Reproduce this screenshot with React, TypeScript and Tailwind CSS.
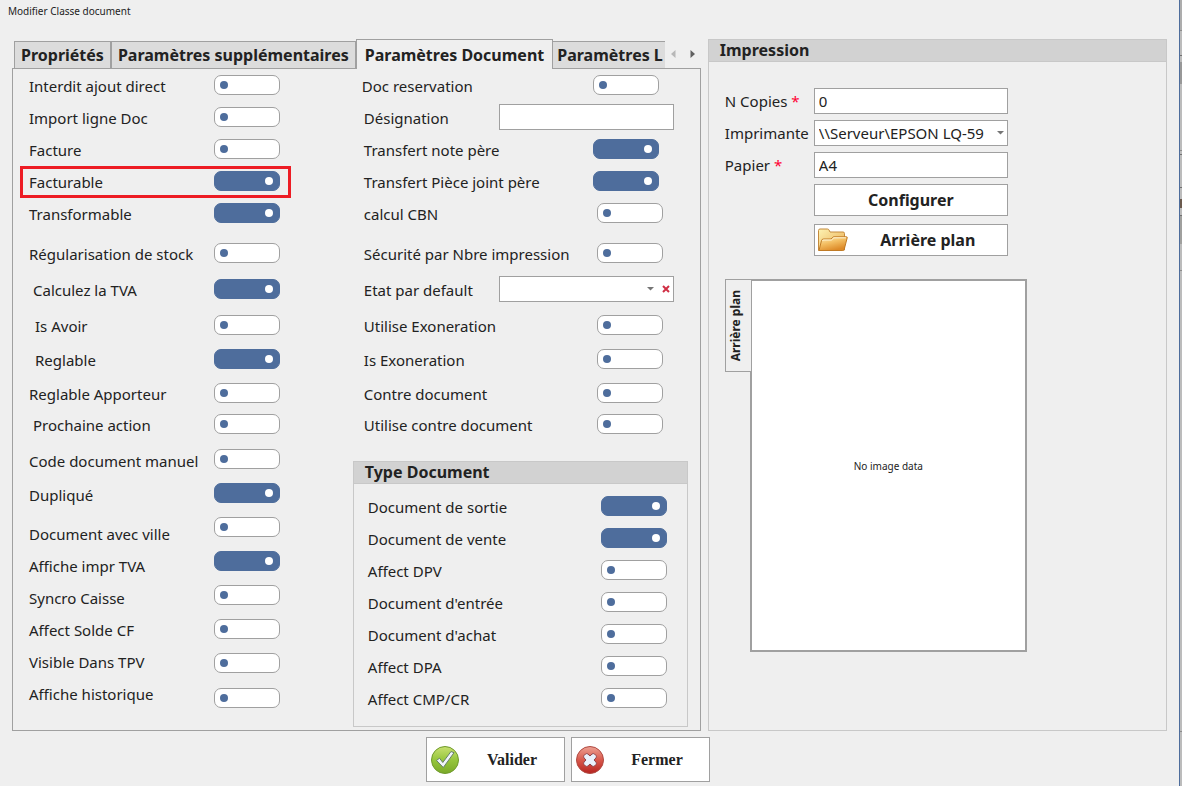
import React from "react";

type Row = { label: string; rowClass: string; indent?: string };
type SwitchSlot = { rowClass: string; on?: boolean };

const leftLabels: Row[] = [
  { label: "Interdit ajout direct", rowClass: "h-8" },
  { label: "Import ligne Doc", rowClass: "h-8" },
  { label: "Facture", rowClass: "h-8" },
  { label: "Facturable", rowClass: "h-8" },
  { label: "Transformable", rowClass: "h-8" },
  { label: "Régularisation de stock", rowClass: "mt-1.5 h-9" },
  { label: "Calculez la TVA", rowClass: "h-9", indent: "pl-1" },
  { label: "Is Avoir", rowClass: "h-9", indent: "pl-1.5" },
  { label: "Reglable", rowClass: "h-8", indent: "pl-1.5" },
  { label: "Reglable Apporteur", rowClass: "h-9" },
  { label: "Prochaine action", rowClass: "h-[26px]", indent: "pl-1" },
  { label: "Code document manuel", rowClass: "mt-1.5 h-[34px]" },
  { label: "Dupliqué", rowClass: "h-[34px]" },
  { label: "Document avec ville", rowClass: "mt-1.5 h-8" },
  { label: "Affiche impr TVA", rowClass: "h-8" },
  { label: "Syncro Caisse", rowClass: "h-8" },
  { label: "Affect Solde CF", rowClass: "h-8" },
  { label: "Visible Dans TPV", rowClass: "h-8" },
  { label: "Affiche historique", rowClass: "h-8" },
];

const leftSwitches: SwitchSlot[] = [
  { rowClass: "h-8" },
  { rowClass: "h-8" },
  { rowClass: "h-8" },
  { rowClass: "h-8", on: true },
  { rowClass: "h-8", on: true },
  { rowClass: "mt-1.5 h-9" },
  { rowClass: "h-9", on: true },
  { rowClass: "h-9" },
  { rowClass: "h-8", on: true },
  { rowClass: "h-9" },
  { rowClass: "h-[26px]" },
  { rowClass: "mt-[5px] h-[34px]" },
  { rowClass: "h-[34px]", on: true },
  { rowClass: "h-[34px]" },
  { rowClass: "h-[34px]", on: true },
  { rowClass: "h-[34px]" },
  { rowClass: "h-[34px]" },
  { rowClass: "h-[34px]" },
  { rowClass: "h-9" },
];

type Field = { label: string; rowClass: string; kind: "switch" | "text" | "select"; on?: boolean; inset?: string; indent?: string };

const middleFields: Field[] = [
  { label: "Doc reservation", rowClass: "h-8", kind: "switch", inset: "mr-[15px]", indent: "pl-0" },
  { label: "Désignation", rowClass: "h-8", kind: "text" },
  { label: "Transfert note père", rowClass: "h-8", kind: "switch", on: true, inset: "mr-[15px]" },
  { label: "Transfert Pièce joint père", rowClass: "h-8", kind: "switch", on: true, inset: "mr-[15px]" },
  { label: "calcul CBN", rowClass: "h-8", kind: "switch" },
  { label: "Sécurité par Nbre impression", rowClass: "mt-1.5 h-9", kind: "switch" },
  { label: "Etat par default", rowClass: "h-9", kind: "select" },
  { label: "Utilise Exoneration", rowClass: "h-9", kind: "switch" },
  { label: "Is Exoneration", rowClass: "h-8", kind: "switch" },
  { label: "Contre document", rowClass: "h-9", kind: "switch" },
  { label: "Utilise contre document", rowClass: "h-[26px]", kind: "switch" },
];

const documentTypes = [
  { label: "Document de sortie", on: true },
  { label: "Document de vente", on: true },
  { label: "Affect DPV" },
  { label: "Document d'entrée" },
  { label: "Document d'achat" },
  { label: "Affect DPA" },
  { label: "Affect CMP/CR" },
];

function Switch({ id, on = false }: { id: string; on?: boolean }) {
  return (
    <input
      id={id}
      type="checkbox"
      defaultChecked={on}
      className="flex h-5 w-[66px] shrink-0 appearance-none items-center rounded-[7px] border border-[#a0a0a0] bg-white px-[5px] before:size-2 before:rounded-full before:bg-[#4e6d9c] before:content-[''] checked:justify-end checked:border-[#4e6d9c] checked:bg-[#4e6d9c] checked:pr-1.5 checked:before:bg-white"
    />
  );
}

function FolderIcon() {
  return (
    <svg width="32" height="26" viewBox="0 0 32 26" aria-hidden="true">
      <defs>
        <linearGradient id="folderBack" x1="0" y1="0" x2="1" y2="1">
          <stop offset="0" stopColor="#fdf3b4" />
          <stop offset="1" stopColor="#e9a94c" />
        </linearGradient>
        <linearGradient id="folderFront" x1="0" y1="0" x2="0.5" y2="1">
          <stop offset="0" stopColor="#ffeebb" />
          <stop offset="0.5" stopColor="#f3be62" />
          <stop offset="1" stopColor="#dd8a28" />
        </linearGradient>
      </defs>
      <path d="M1.500 23.500V3.500Q1.500 2 3 2h7.500q1 0 1.500 1l1 2h13q1.500 0 1.500 1.500V23z" fill="url(#folderBack)" stroke="#c58a3c" />
      <path d="M2 23.500 4.500 13.500q.5-1.500 2-1.500h7.500l2.500-2.200H29.500q1 0 .7 1l-3 11.700q-.4 1-1.700 1z" fill="url(#folderFront)" stroke="#c07a25" />
      <path d="M5.500 14q.3-1 1.300-1h7.600l2.500-2.200h12" fill="none" stroke="#fff6d6" />
    </svg>
  );
}

function ValidIcon() {
  return (
    <svg width="30" height="30" viewBox="0 0 30 30" aria-hidden="true">
      <defs>
        <linearGradient id="validFill" x1="0" y1="0" x2="0" y2="1">
          <stop offset="0" stopColor="#c8e070" />
          <stop offset="0.5" stopColor="#96c63c" />
          <stop offset="1" stopColor="#7aa928" />
        </linearGradient>
      </defs>
      <circle cx="15" cy="15" r="13.500" fill="url(#validFill)" stroke="#6f9a2c" />
      <path d="m6.500 15.500 3-2.300 3.300 4.300L21 6.500l3 1.200L13.300 22.500z" fill="#f0f4fb" stroke="#66806a" strokeLinejoin="round" />
    </svg>
  );
}

function CloseIcon() {
  return (
    <svg width="30" height="30" viewBox="0 0 30 30" aria-hidden="true">
      <defs>
        <linearGradient id="closeFill" x1="0" y1="0" x2="0" y2="1">
          <stop offset="0" stopColor="#eda294" />
          <stop offset="0.5" stopColor="#d9584b" />
          <stop offset="1" stopColor="#b5231f" />
        </linearGradient>
      </defs>
      <circle cx="15" cy="15" r="13.500" fill="url(#closeFill)" stroke="#b04a42" />
      <path
        d="M9 10.500 10.500 9q1.200-.8 2.400 0L15 11 17.100 9q1.200-.8 2.400 0L21 10.500q.8 1.200 0 2.400L19 15l2 2.100q.8 1.200 0 2.400L19.500 21q-1.200.8-2.400 0L15 19l-2.100 2q-1.200.8-2.400 0L9 19.500q-.8-1.200 0-2.400L11 15 9 12.900q-.8-1.200 0-2.400z"
        fill="#eaf1fb"
        stroke="#8f4348"
      />
    </svg>
  );
}

function CaretDown() {
  return (
    <svg width="7" height="4" viewBox="0 0 7 4" aria-hidden="true">
      <path d="M0 0h7L3.500 3.500z" fill="#757575" />
    </svg>
  );
}

function Tabs() {
  const idle = "mb-px flex h-[27px] shrink-0 items-center border border-b-0 border-[#a0a0a0] bg-[#dcdcdc] whitespace-nowrap";
  return (
    <div role="tablist" className="flex h-[30px] items-end pl-0.5 text-[16px] font-bold">
      <div className="flex min-w-0 flex-1 items-end overflow-hidden">
        <button role="tab" className={idle + " px-1.5"}>Propriétés</button>
        <button role="tab" className={idle + " px-1.5"}>Paramètres supplémentaires</button>
        <button role="tab" aria-selected="true" className="z-10 flex h-[30px] shrink-0 items-center border border-b-0 border-[#a0a0a0] bg-[#efefef] px-2 whitespace-nowrap">
          Paramètres Document
        </button>
        <button role="tab" className={idle + " flex-1 border-x-0 pl-1"}>Paramètres L</button>
      </div>
      <div className="flex h-[30px] w-9 shrink-0 items-center justify-between px-1.5">
        <button aria-label="Onglets précédents">
          <svg width="5" height="8" viewBox="0 0 5 8" aria-hidden="true"><path d="M4.500 0v8L0 4z" fill="#b8b8b8" /></svg>
        </button>
        <button aria-label="Onglets suivants">
          <svg width="5" height="8" viewBox="0 0 5 8" aria-hidden="true"><path d="M.5 0v8L5 4z" fill="#606060" /></svg>
        </button>
      </div>
    </div>
  );
}

function LeftOptions() {
  return (
    <div className="flex flex-1 pl-4">
      <div className="w-[185px] shrink-0 pt-px">
        {leftLabels.map((row, i) => (
          <div key={row.label} className={`relative flex items-center ${row.rowClass} ${row.indent ?? ""}`}>
            <label htmlFor={`option-${i}`} className="whitespace-nowrap">{row.label}</label>
            {row.label === "Facturable" && (
              <span className="pointer-events-none absolute top-0 -left-[9px] h-8 w-[271px] border-3 border-[#ed1c24]" />
            )}
          </div>
        ))}
      </div>
      <div>
        {leftSwitches.map((slot, i) => (
          <div key={i} className={`flex items-center ${slot.rowClass}`}>
            <Switch id={`option-${i}`} on={slot.on} />
          </div>
        ))}
      </div>
    </div>
  );
}

function MiddleOptions() {
  return (
    <div className="pr-[26px] pl-[9px]">
      {middleFields.map((field, i) => {
        const id = `field-${i}`;
        return (
          <div key={field.label} className={`flex items-center justify-between ${field.rowClass}`}>
            <label htmlFor={id} className={`pt-0.5 whitespace-nowrap ${field.indent ?? "pl-0.5"}`}>{field.label}</label>
            {field.kind === "switch" && (
              <div className={field.inset ?? "mr-[11px]"}>
                <Switch id={id} on={field.on} />
              </div>
            )}
            {field.kind === "text" && <input id={id} type="text" className="h-[26px] w-[175px] border border-[#a0a0a0] bg-white px-1" />}
            {field.kind === "select" && (
              <div className="relative flex h-[26px] w-[175px] border border-[#a0a0a0] bg-white">
                <select id={id} className="w-full appearance-none bg-white px-1" />
                <div className="pointer-events-none absolute inset-y-0 right-[3px] flex items-center gap-2">
                  <CaretDown />
                  <svg width="8" height="8" viewBox="0 0 8 8" aria-hidden="true">
                    <path d="M1 1l6 6M7 1 1 7" stroke="#d02f45" strokeWidth="2" />
                  </svg>
                </div>
              </div>
            )}
          </div>
        );
      })}
    </div>
  );
}

function GroupTitle({ children }: { children: React.ReactNode }) {
  return (
    <h2 className="flex h-[22px] items-center border-b border-[#c8c8c8] bg-[#d2d2d2] px-[11px] pb-px text-[16px] font-bold">
      {children}
    </h2>
  );
}

function DocumentTypeGroup() {
  return (
    <fieldset className="mr-3 mb-[3px] border border-[#c8c8c8] pb-3">
      <GroupTitle>Type Document</GroupTitle>
      <div className="pt-1.5 pr-5 pl-3.5">
        {documentTypes.map((item, i) => (
          <div key={item.label} className="flex h-8 items-center justify-between">
            <label htmlFor={`type-${i}`} className="pt-0.5">{item.label}</label>
            <Switch id={`type-${i}`} on={item.on} />
          </div>
        ))}
      </div>
    </fieldset>
  );
}

function PrintPanel() {
  const box = "h-[26px] w-full border border-[#a0a0a0] bg-white px-1";
  return (
    <section className="border border-[#c8c8c8]">
      <GroupTitle>Impression</GroupTitle>
      <div className="px-4 pt-[26px]">
        <div className="grid w-fit grid-cols-[89px_194px] items-center gap-y-1.5">
          <label htmlFor="copies">N Copies <span className="text-[#ff0033]">*</span></label>
          <input id="copies" type="text" defaultValue="0" className={box} />
          <label htmlFor="printer">Imprimante</label>
          <div className="relative">
            <select id="printer" className={box + " appearance-none"}>
              <option>\\Serveur\EPSON LQ-59</option>
            </select>
            <div className="pointer-events-none absolute inset-y-0 right-1 flex items-center"><CaretDown /></div>
          </div>
          <label htmlFor="paper">Papier <span className="text-[#ff0033]">*</span></label>
          <input id="paper" type="text" defaultValue="A4" className={box} />
          <button className="col-start-2 h-8 border border-[#a0a0a0] bg-white text-[16px] font-bold">Configurer</button>
          <button className="col-start-2 mt-0.5 flex h-8 items-center border border-[#a0a0a0] bg-white pl-0.5 text-[16px] font-bold">
            <FolderIcon />
            <span className="flex-1">Arrière plan</span>
          </button>
        </div>
        <div className="mt-[23px] flex items-start">
          <button role="tab" className="relative -mr-0.5 flex h-[93px] w-[27px] items-center justify-center border border-[#a0a0a0] bg-[#efefef] pr-1 text-[12px] font-bold">
            <span className="rotate-180 [writing-mode:vertical-rl]">Arrière plan</span>
          </button>
          <div className="flex h-[373px] w-[277px] items-center justify-center border-2 border-[#a0a0a0] bg-white text-[10px]">
            No image data
          </div>
        </div>
      </div>
    </section>
  );
}

function WindowEdge() {
  return (
    <div className="flex w-[3px] shrink-0 flex-col border-l border-[#4e6d9c] bg-[#bcbcbc]">
      <div className="h-[31px] border-b border-[#8c8c8c] bg-[#adadad]" />
      <div className="h-[25px] border-b border-[#707070]" />
      <div className="mt-1.5 h-[22px] bg-[#989898]" />
      <div className="h-[67px] border-b border-[#8c8c8c]" />
      <div className="h-1 border-b border-[#707070]" />
      <div className="h-[33px] border-b border-[#707070]" />
      <div className="mt-[11px] h-[9px] bg-[#6b5a4e]" />
      <div className="h-2 border-b border-[#707070]" />
      <div className="h-7 bg-[#a0a09e]" />
      <div className="h-[27px] border-b border-[#8c8c8c]" />
      <div className="h-[461px] border-b border-[#8c8c8c]" />
    </div>
  );
}

export default function App() {
  const action = "flex h-[45px] w-[139px] items-center border border-[#a0a0a0] bg-white pl-[3px]";
  return (
    <div className="flex min-h-screen bg-[#efefef] font-['Noto_Sans',sans-serif] text-[15px] leading-5 text-[#222222]">
      <main className="min-w-0 flex-1">
        <h1 className="flex h-[39px] pt-[1px] pl-2 text-[10px]">Modifier Classe document</h1>
        <div className="grid grid-cols-[3fr_2fr] gap-x-[7px] pr-3 pl-3">
          <div className="flex min-w-0 flex-col">
            <Tabs />
            <div className="-mt-px flex flex-1 border border-[#a0a0a0]">
              <LeftOptions />
              <div className="w-[347px] shrink-0">
                <MiddleOptions />
                <div className="h-6" />
                <DocumentTypeGroup />
              </div>
            </div>
          </div>
          <PrintPanel />
        </div>
        <div className="flex gap-1.5 pt-1.5 pl-[426px] font-['Liberation_Serif',serif] text-[16px] font-bold">
          <button className={action}>
            <ValidIcon />
            <span className="flex-1">Valider</span>
          </button>
          <button className={action}>
            <CloseIcon />
            <span className="flex-1">Fermer</span>
          </button>
        </div>
      </main>
      <WindowEdge />
    </div>
  );
}
